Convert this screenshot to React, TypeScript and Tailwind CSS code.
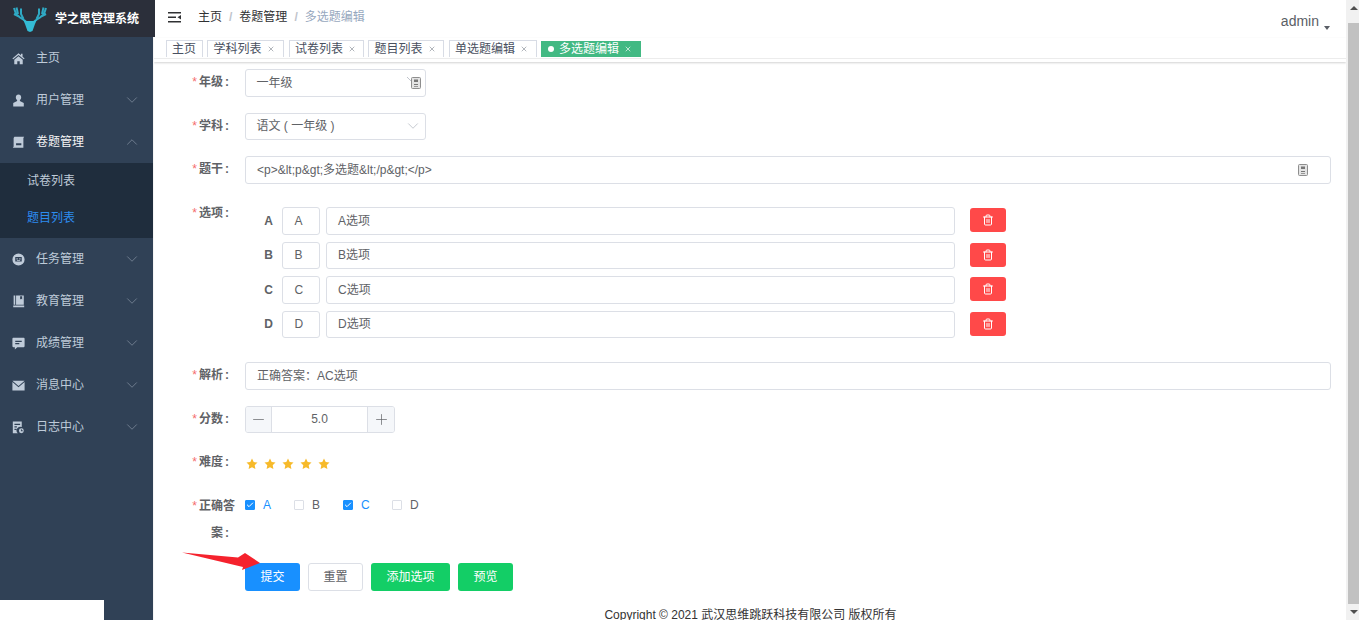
import { Check, ChevronDown, ChevronUp, Minus, Plus, Trash2, X } from "lucide-react";
import type { ReactNode } from "react";

const font = { fontFamily: '"Liberation Sans", "Noto Sans CJK SC", sans-serif' };

const iconClass = "size-[13px] shrink-0 fill-[#bfcbd9]";

function HomeIcon() {
  return (
    <svg viewBox="0 0 16 16" className={iconClass}>
      <path d="M8 1.500 0.500 8l1 1L8 3.600 14.500 9l1-1-2.500-2.200V2h-2v2L8 1.500ZM2.800 9.600V15h3.700v-3.600h3V15h3.700V9.600L8 5.200 2.800 9.600Z" />
    </svg>
  );
}

function UserIcon() {
  return (
    <svg viewBox="0 0 16 16" className={iconClass}>
      <path d="M8 0.500c-2 0-3.300 1.500-3.300 3.600 0 1.500.7 2.800 1.600 3.500v1.100L1.500 11v4.500h13V11L9.700 8.700V7.600c.9-.7 1.600-2 1.600-3.500C11.300 2 10 .5 8 .5Z" />
    </svg>
  );
}

function PaperIcon() {
  return (
    <svg viewBox="0 0 16 16" className={iconClass}>
      <path d="M3 1h12l-1 1.500V14.500H1l1-1.500V2.500L3 1Zm2 8v2.500h6.500V9H5Z" />
    </svg>
  );
}

function FaceIcon() {
  return (
    <svg viewBox="0 0 16 16" className={iconClass}>
      <path
        fillRule="evenodd"
        d="M8 .5a7.500 7.500 0 1 1 0 15 7.500 7.500 0 0 1 0-15ZM4 5v5.500h8V5H4Zm1.500 1.500h1.500V8H5.500V6.500Zm3.500 0h1.500V8H9V6.500ZM6 9h4v.8H6V9Z"
      />
    </svg>
  );
}

function BookIcon() {
  return (
    <svg viewBox="0 0 16 16" className={iconClass}>
      <path d="M2 .5h2v11.500H2V.5Zm3 0h9.500v11.500H5V.5Zm5 1v4l1.300-1 1.200 1v-4H10ZM1.500 13h13.500v2H1.500v-2Z" />
    </svg>
  );
}

function ChatIcon() {
  return (
    <svg viewBox="0 0 16 16" className={iconClass}>
      <path
        fillRule="evenodd"
        d="M1.500 1h13c.6 0 1 .4 1 1v9.500c0 .6-.4 1-1 1H6.500L3.500 15.500V12.500h-2c-.6 0-1-.4-1-1V2c0-.6.4-1 1-1ZM4 4.500V6h8V4.500H4Zm0 3V9h5V7.500H4Z"
      />
    </svg>
  );
}

function MailIcon() {
  return (
    <svg viewBox="0 0 16 16" className={iconClass}>
      <path d="M.5 2h15L8 8.500.5 2Zm0 1.800V14h15V3.800L8 10.300.5 3.800Z" />
    </svg>
  );
}

function LogIcon() {
  return (
    <svg viewBox="0 0 16 16" className={iconClass}>
      <path
        fillRule="evenodd"
        d="M1 .5h11v7a4.500 4.500 0 0 0-4.800 7.500H1V.5Zm2 3V5h7V3.500H3Zm0 3V8h3V6.500H3Zm0 3V11h2.500V9.500H3ZM11.500 9a3 3 0 1 1 0 6 3 3 0 0 1 0-6Zm-.5 1.300v2.200h2.200v-1H12v-1.200h-1Z"
      />
    </svg>
  );
}

function DeerLogo() {
  return (
    <svg viewBox="0 0 34 26" className="h-[26px] w-[34px]" fill="none">
      <path
        d="M1 2 3 8 7 11.500 12.500 15M3.500 1.500 5 8M1 8 6 10.500M33 2 31 8 27 11.500 21.500 15M30.500 1.500 29 8M33 8 28 10.500M8 2.500 8 8 10.500 13M26 2.500 26 8 23.500 13"
        stroke="#2fa9c4"
        strokeWidth="2"
      />
      <path d="M10 13.500 14 15 20 15 24 13.500 22 18 19.500 25 17 26 14.500 25 12 18Z" fill="#34bcd6" />
    </svg>
  );
}

function FormFieldIcon() {
  return (
    <svg viewBox="0 0 10 12" className="h-[12px] w-[10px]">
      <rect x="0.5" y="0.5" width="9" height="11" rx="1" fill="#e4e4e4" stroke="#8e8e8e" />
      <rect x="3" y="2.500" width="4" height="2.500" fill="#777777" />
      <rect x="3" y="7" width="4" height="1" fill="#777777" />
      <rect x="3" y="9" width="4" height="1" fill="#999999" />
    </svg>
  );
}

type MenuRowProps = {
  icon: ReactNode;
  label: string;
  open?: boolean;
  hasChildren?: boolean;
};

function MenuRow({ icon, label, open, hasChildren = true }: MenuRowProps) {
  return (
    <div className="flex h-[42px] items-center pl-[12px] pr-[12px]">
      {icon}
      <span className={`ml-[11px] flex-1 pb-[1px] text-[12px] ${open ? "text-[#f4f4f5]" : "text-[#bfcbd9]"}`}>{label}</span>
      {hasChildren &&
        (open ? (
          <ChevronUp className="size-[18px] text-[#748193]" strokeWidth={1.2} />
        ) : (
          <ChevronDown className="size-[18px] text-[#748193]" strokeWidth={1.2} />
        ))}
    </div>
  );
}

function Sidebar() {
  return (
    <aside className="relative flex h-full w-[153px] shrink-0 flex-col bg-[#304156]">
      <div className="flex h-[37px] w-[155px] shrink-0 items-center bg-[#2b2f3a] pl-[13px]">
        <DeerLogo />
        <span className="ml-[8px] text-[12px] font-bold whitespace-nowrap text-white">学之思管理系统</span>
      </div>
      <MenuRow icon={<HomeIcon />} label="主页" hasChildren={false} />
      <MenuRow icon={<UserIcon />} label="用户管理" />
      <MenuRow icon={<PaperIcon />} label="卷题管理" open />
      <div className="bg-[#1f2d3d] text-[12px]">
        <div className="flex h-[37px] items-center pb-[2px] pl-[27px] text-[#bfcbd9]">试卷列表</div>
        <div className="flex h-[38px] items-center pb-[3px] pl-[27px] text-[#2d8cf0]">题目列表</div>
      </div>
      <MenuRow icon={<FaceIcon />} label="任务管理" />
      <MenuRow icon={<BookIcon />} label="教育管理" />
      <MenuRow icon={<ChatIcon />} label="成绩管理" />
      <MenuRow icon={<MailIcon />} label="消息中心" />
      <MenuRow icon={<LogIcon />} label="日志中心" />
      <div className="absolute bottom-0 left-0 h-[20px] w-[104px] bg-white" />
    </aside>
  );
}

function TopBar() {
  return (
    <header className="flex h-[37px] shrink-0 items-center bg-white pb-[3px] pl-[14px] pr-[16px] text-[12px]">
      <svg viewBox="0 0 13 11" className="h-[11px] w-[13px]" fill="#303133">
        <rect x="0" y="0" width="13" height="1.500" />
        <rect x="0" y="4.500" width="8" height="1.500" />
        <rect x="0" y="9" width="13" height="1.500" />
        <path d="M13 3v4.500L9.500 5.200Z" />
      </svg>
      <nav className="ml-[17px] flex items-center">
        <span className="text-[#303133]">主页</span>
        <span className="mx-[7px] font-bold text-[#c0c4cc]">/</span>
        <span className="text-[#303133]">卷题管理</span>
        <span className="mx-[7px] font-bold text-[#c0c4cc]">/</span>
        <span className="text-[#97a8be]">多选题编辑</span>
      </nav>
      <div className="ml-auto flex items-start pt-[8px] text-[14px] text-[#5a5e66]">
        <span>admin</span>
        <span className="mt-[15px] ml-[5px] h-0 w-0 border-x-[3.500px] border-t-[4px] border-x-transparent border-t-[#5a5e66]" />
      </div>
    </header>
  );
}

const tabs = [
  { label: "主页", closable: false },
  { label: "学科列表", closable: true, width: "w-[77px]" },
  { label: "试卷列表", closable: true, width: "w-[75px]" },
  { label: "题目列表", closable: true, width: "w-[76px]" },
  { label: "单选题编辑", closable: true, width: "w-[88px]" },
];

function TabBar() {
  return (
    <div className="relative z-10 mt-[1px] shrink-0 bg-white shadow-[0_1px_2px_rgba(0,0,0,0.18)]">
      <div className="flex h-[19px] items-end gap-[4.500px] pl-[11.500px]">
        {tabs.map((tab) => (
          <div
            key={tab.label}
            className={`flex h-[17px] items-center border border-b-0 border-[#d8dce5] pl-[5.500px] text-[12px] text-[#495060] ${tab.width ?? "w-[37px]"}`}
          >
            {tab.label}
            {tab.closable && <X className="ml-[5px] size-[8px] text-[#8a8f98]" strokeWidth={2} />}
          </div>
        ))}
        <div className="flex h-[16px] w-[100px] items-center bg-[#42b983] pl-[7px] text-[12px] text-white">
          <span className="mr-[5px] size-[6px] rounded-full bg-white" />
          多选题编辑
          <X className="ml-[5px] size-[8px]" strokeWidth={2} />
        </div>
      </div>
      <div className="mt-[1px] h-[4px] border-t border-[#ececec]" />
    </div>
  );
}

function FieldLabel({ children, leading = "leading-[27px]" }: { children: ReactNode; leading?: string }) {
  return (
    <div className={`flex w-[75px] shrink-0 items-start justify-end pr-[16px] text-[12px] font-bold whitespace-nowrap text-[#606266] ${leading}`}>
      <span className="mr-[2px] font-normal text-[#f56c6c]">*</span>
      {children}
      <span className="ml-[2px]">:</span>
    </div>
  );
}

const inputClass = "flex h-[27.500px] items-center rounded-[3px] border border-[#dcdfe6] bg-white text-[12px] text-[#606266]";

const options = [
  { key: "A", value: "A选项" },
  { key: "B", value: "B选项" },
  { key: "C", value: "C选项" },
  { key: "D", value: "D选项" },
];

const answers = [
  { key: "A", checked: true },
  { key: "B", checked: false },
  { key: "C", checked: true },
  { key: "D", checked: false },
];

function QuestionForm() {
  return (
    <form className="flex flex-col pt-[7px] pl-[16px] pr-[15px]">
      <div className="flex">
        <FieldLabel>年级</FieldLabel>
        <div className={`${inputClass} relative w-[181px] pl-[10.500px]`}>
          一年级
          <span className="absolute top-[7px] right-[4px] flex items-start gap-[0.500px]">
            <svg viewBox="0 0 4 4" className="size-[4px]">
              <path d="M0 0 4 4" stroke="#c0c4cc" />
            </svg>
            <FormFieldIcon />
          </span>
        </div>
      </div>

      <div className="mt-[16px] flex">
        <FieldLabel>学科</FieldLabel>
        <div className={`${inputClass} w-[181px] justify-between pl-[10.500px] pr-[3px]`}>
          语文 ( 一年级 )
          <ChevronDown className="size-[18px] text-[#c0c4cc]" strokeWidth={1.2} />
        </div>
      </div>

      <div className="mt-[16px] flex">
        <FieldLabel>题干</FieldLabel>
        <div className={`${inputClass} flex-1 justify-between pl-[11px] pr-[22px]`}>
          {"<p>&lt;p&gt;多选题&lt;/p&gt;</p>"}
          <FormFieldIcon />
        </div>
      </div>

      <div className="mt-[23.500px] flex">
        <FieldLabel leading="leading-[12px]">选项</FieldLabel>
        <div className="flex flex-col gap-[7px]">
          {options.map((option) => (
            <div key={option.key} className="flex items-center">
              <span className="w-[37px] pr-[9px] text-right text-[12px] font-bold text-[#606266]">{option.key}</span>
              <div className={`${inputClass} w-[38px] pl-[11.500px]`}>{option.key}</div>
              <div className={`${inputClass} ml-[6px] w-[629px] pl-[11px]`}>{option.value}</div>
              <button type="button" className="mb-[1.500px] ml-[15px] flex h-[24px] w-[36px] items-center justify-center rounded-[3px] bg-[#ff4949] text-white">
                <Trash2 className="size-[12px]" strokeWidth={2} />
              </button>
            </div>
          ))}
        </div>
      </div>

      <div className="mt-[24px] flex">
        <FieldLabel>解析</FieldLabel>
        <div className={`${inputClass} flex-1 pl-[11px]`}>正确答案：AC选项</div>
      </div>

      <div className="mt-[16px] flex">
        <FieldLabel>分数</FieldLabel>
        <div className={`${inputClass} w-[150px] overflow-hidden`}>
          <span className="flex h-full w-[26px] items-center justify-center border-r border-[#dcdfe6] bg-[#f5f7fa]">
            <Minus className="size-[17px]" strokeWidth={1} />
          </span>
          <span className="flex-1 text-center">5.0</span>
          <span className="flex h-full w-[27px] items-center justify-center border-l border-[#dcdfe6] bg-[#f5f7fa]">
            <Plus className="size-[17px]" strokeWidth={1} />
          </span>
        </div>
      </div>

      <div className="mt-[16px] flex">
        <FieldLabel>难度</FieldLabel>
        <div className="flex h-[27.500px] items-center gap-[6px] pl-[1px] pt-[3px]">
          {[0, 1, 2, 3, 4].map((star) => (
            <svg key={star} viewBox="0 0 12 12" className="size-[12px] fill-[#f7ba2a]">
              <path d="M6 .6 7.700 4.100l3.800.5-2.800 2.600.7 3.800L6 9.200 2.600 11l.7-3.800L.5 4.600l3.800-.5L6 .6Z" />
            </svg>
          ))}
        </div>
      </div>

      <div className="mt-[16px] flex">
        <div className="flex w-[75px] shrink-0 flex-col text-[12px] leading-[27px] font-bold whitespace-nowrap text-[#606266]">
          <div className="flex justify-end pr-[10px]">
            <span className="mr-[2px] font-normal text-[#f56c6c]">*</span>
            正确答
          </div>
          <div className="pr-[16px] text-right">
            案<span className="ml-[2px]">:</span>
          </div>
        </div>
        <div className="flex h-[25px] items-center">
          {answers.map((answer) => (
            <label key={answer.key} className="flex w-[49px] items-center text-[12px]">
              <span
                className={`flex size-[10px] items-center justify-center rounded-[1px] border ${answer.checked ? "border-[#1890ff] bg-[#1890ff]" : "border-[#dcdfe6] bg-white"}`}
              >
                {answer.checked && <Check className="size-[8px] text-white" strokeWidth={3} />}
              </span>
              <span className={`ml-[8px] ${answer.checked ? "text-[#1890ff]" : "text-[#606266]"}`}>{answer.key}</span>
            </label>
          ))}
        </div>
      </div>

      <div className="relative mt-[16px] flex gap-[8px] pl-[75px] text-[12px]">
        <button type="button" className="h-[28px] w-[55px] rounded-[3px] bg-[#1890ff] text-white">提交</button>
        <button type="button" className="h-[28px] w-[55px] rounded-[3px] border border-[#dcdfe6] bg-white text-[#606266]">重置</button>
        <button type="button" className="h-[28px] w-[79px] rounded-[3px] bg-[#13ce66] text-white">添加选项</button>
        <button type="button" className="h-[28px] w-[55px] rounded-[3px] bg-[#13ce66] text-white">预览</button>
        <svg viewBox="0 0 82 20" className="absolute top-[-11px] left-[12px] h-[20px] w-[82px]">
          <path d="M0 0.500 56 5.500 63 1 78 11 60 18 61 15Z" fill="#f5222d" />
        </svg>
      </div>

      <p className="mt-[15px] text-center text-[12px] text-[#333333]">Copyright © 2021 武汉思维跳跃科技有限公司 版权所有</p>
    </form>
  );
}

function Scrollbar() {
  return (
    <div className="flex h-full w-[13px] shrink-0 flex-col items-end bg-[#f1f1f1]">
      <div className="flex h-[23px] w-[11px] justify-center pt-[6px]">
        <span className="h-0 w-0 border-x-[4px] border-b-[4px] border-x-transparent border-b-[#505050]" />
      </div>
      <div className="h-[581px] w-[11px] bg-[#c1c1c1]" />
      <div className="flex w-[11px] justify-center pt-[6px]">
        <span className="h-0 w-0 border-x-[4px] border-t-[4px] border-x-transparent border-t-[#505050]" />
      </div>
    </div>
  );
}

export default function App() {
  return (
    <div className="flex h-[620px] w-[1359px] overflow-hidden bg-[#f4f4f4]" style={font}>
      <Sidebar />
      <main className="ml-[1px] flex h-full min-w-0 flex-1 flex-col overflow-hidden bg-white">
        <TopBar />
        <TabBar />
        <QuestionForm />
      </main>
      <Scrollbar />
    </div>
  );
}
